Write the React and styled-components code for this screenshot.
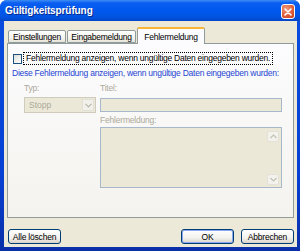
import React from 'react';
import styled, { createGlobalStyle } from 'styled-components';

const GlobalStyle = createGlobalStyle`
    * { box-sizing: border-box; }
    body {
        margin: 0;
        background: #ffffff;
        font-family: 'Liberation Sans', Arial, sans-serif;
    }
`;

const App = () => {
    return (
        <>
            <GlobalStyle />
            <Window>
                <TitleBar>
                    <Title>Gültigkeitsprüfung</Title>
                    <CloseButton>
                        <svg width="8" height="8" viewBox="0 0 8 8">
                            <path d="M1 1 L7 7 M7 1 L1 7" stroke="#fff" strokeWidth="1.6" strokeLinecap="round" />
                        </svg>
                    </CloseButton>
                </TitleBar>
                <Body>
                    <TabStrip>
                        <Tab $w={58}>Einstellungen</Tab>
                        <Tab $w={69}>Eingabemeldung</Tab>
                        <Tab $w={68} $active>Fehlermeldung</Tab>
                    </TabStrip>
                    <Panel>
                        <CheckRow>
                            <CheckBox />
                            <FocusLabel>Fehlermeldung anzeigen, wenn ungültige Daten eingegeben wurden.</FocusLabel>
                        </CheckRow>
                        <Heading>Diese Fehlermeldung anzeigen, wenn ungültige Daten eingegeben wurden:</Heading>
                        <Form>
                            <Column>
                                <Label>Typ:</Label>
                                <Select>
                                    <span>Stopp</span>
                                    <DropButton>
                                        <svg width="7" height="5" viewBox="0 0 7 5">
                                            <path d="M0.5 0.8 L3.5 3.8 L6.5 0.8" stroke="#b9b6a8" strokeWidth="1.2" fill="none" />
                                        </svg>
                                    </DropButton>
                                </Select>
                            </Column>
                            <Column>
                                <Label>Titel:</Label>
                                <Field />
                                <Label $gap>Fehlermeldung:</Label>
                                <Area>
                                    <ScrollBar>
                                        <ArrowBox>
                                            <svg width="7" height="5" viewBox="0 0 7 5">
                                                <path d="M0.5 4 L3.5 1 L6.5 4" stroke="#c3c1b4" strokeWidth="1.2" fill="none" />
                                            </svg>
                                        </ArrowBox>
                                        <ArrowBox>
                                            <svg width="7" height="5" viewBox="0 0 7 5">
                                                <path d="M0.5 1 L3.5 4 L6.5 1" stroke="#c3c1b4" strokeWidth="1.2" fill="none" />
                                            </svg>
                                        </ArrowBox>
                                    </ScrollBar>
                                </Area>
                            </Column>
                        </Form>
                    </Panel>
                    <Footer>
                        <Button>Alle löschen</Button>
                        <Spacer />
                        <Button $default>OK</Button>
                        <Button>Abbrechen</Button>
                    </Footer>
                </Body>
            </Window>
        </>
    );
};

const Window = styled.div`
    width: 300px;
    height: 251px;
    display: flex;
    flex-direction: column;
    background: linear-gradient(180deg, #0a4ee0, #0640d4 70%, #0a2fa8);
    border-radius: 7px 7px 0 0;
    overflow: hidden;
`;

const TitleBar = styled.div`
    height: 21px;
    flex: none;
    display: flex;
    align-items: center;
    justify-content: space-between;
    padding: 0 5px 0 5px;
    background: linear-gradient(180deg, #3d8cf4 0, #0a5ef0 3px, #0058ee 50%, #0054e2 80%, #0046c8 100%);
`;

const Title = styled.div`
    color: #ffffff;
    font-weight: bold;
    font-size: 10px;
    letter-spacing: -0.1px;
    text-shadow: 1px 1px 0 #0a2a8c;
`;

const CloseButton = styled.div`
    width: 14px;
    height: 15px;
    margin-top: 2px;
    display: flex;
    align-items: center;
    justify-content: center;
    border: 1px solid #ffffff;
    border-radius: 3px;
    background: radial-gradient(circle at 35% 30%, #f19a7d, #dc5a36 60%, #c2401e);
`;

const Body = styled.div`
    flex: 1;
    margin: 0 3px 4px 4px;
    background: #ece9d8;
    padding: 6px 3px 3px 3px;
    display: flex;
    flex-direction: column;
`;

const TabStrip = styled.div`
    height: 16px;
    flex: none;
    display: flex;
    align-items: flex-end;
    padding-left: 1px;
    position: relative;
    z-index: 1;
`;

const Tab = styled.div`
    width: ${(p) => p.$w}px;
    height: ${(p) => (p.$active ? '17px' : '13px')};
    margin-bottom: ${(p) => (p.$active ? '-1px' : '0')};
    margin-right: 1px;
    padding-top: ${(p) => (p.$active ? '1px' : '0')};
    display: flex;
    align-items: center;
    justify-content: center;
    font-size: 8.5px;
    letter-spacing: -0.25px;
    white-space: nowrap;
    color: #000000;
    border: 1px solid #919b9c;
    border-bottom: ${(p) => (p.$active ? 'none' : '1px solid #919b9c')};
    border-top: ${(p) => (p.$active ? '2px solid #f7b63a' : '1px solid #919b9c')};
    border-radius: 2px 2px 0 0;
    background: ${(p) => (p.$active ? '#fcfcfe' : 'linear-gradient(180deg, #ffffff, #f4f3ee 60%, #e6e4d9)')};
`;

const Panel = styled.div`
    height: 175px;
    flex: none;
    border: 1px solid #919b9c;
    background: linear-gradient(180deg, #fcfcfe, #f4f3ee);
    padding: 8px 6px 0 4px;
`;

const CheckRow = styled.div`
    display: flex;
    align-items: center;
    gap: 2px;
    height: 13px;
    padding-left: 1px;
`;

const CheckBox = styled.div`
    width: 9px;
    height: 10px;
    flex: none;
    border: 1px solid #1c5180;
    background: linear-gradient(135deg, #dcdcd7, #ffffff);
`;

const FocusLabel = styled.span`
    font-size: 8.5px;
    letter-spacing: -0.25px;
    color: #000000;
    outline: 1px dotted #000000;
    padding: 0 2px;
    line-height: 11px;
    white-space: nowrap;
`;

const Heading = styled.div`
    margin-top: 3px;
    font-size: 8.5px;
    letter-spacing: -0.25px;
    color: #1e45d2;
    white-space: nowrap;
    line-height: 11px;
`;

const Form = styled.div`
    display: grid;
    grid-template-columns: 72px 182px;
    gap: 4px;
    margin: 4px 0 0 12px;
`;

const Column = styled.div`
    display: flex;
    flex-direction: column;
`;

const Label = styled.div`
    font-size: 8.5px;
    letter-spacing: -0.2px;
    color: #aca899;
    line-height: 11px;
    margin: ${(p) => (p.$gap ? '3px 0 1px' : '0 0 3px')};
`;

const Select = styled.div`
    height: 16px;
    display: flex;
    align-items: center;
    justify-content: space-between;
    padding: 1px 1px 1px 4px;
    border: 1px solid #cfccbd;
    background: #ebe8d8;
    font-size: 8.5px;
    color: #aca899;
`;

const DropButton = styled.div`
    width: 12px;
    height: 12px;
    display: flex;
    align-items: center;
    justify-content: center;
    background: #f1f0ea;
    border: 1px solid #e2e0d6;
`;

const Field = styled.div`
    height: 14px;
    margin-top: 1px;
    border: 1px solid #a8b8cb;
    background: #ebe8d8;
`;

const Area = styled.div`
    height: 61px;
    display: flex;
    justify-content: flex-end;
    padding: 3px 2px 2px 0;
    border: 1px solid #a8b8cb;
    background: #ebe8d8;
`;

const ScrollBar = styled.div`
    width: 12px;
    display: flex;
    flex-direction: column;
    justify-content: space-between;
`;

const ArrowBox = styled.div`
    height: 11px;
    display: flex;
    align-items: center;
    justify-content: center;
    border: 1px solid #e4e2d8;
    border-radius: 2px;
    background: #f3f2ec;
`;

const Footer = styled.div`
    display: flex;
    gap: 7px;
    margin-top: 11px;
    padding-left: 1px;
`;

const Spacer = styled.div`
    flex: 1;
`;

const Button = styled.div`
    width: 53px;
    height: 15px;
    display: flex;
    align-items: center;
    justify-content: center;
    font-size: 8.5px;
    letter-spacing: -0.2px;
    white-space: nowrap;
    color: #000000;
    border: 1px solid #003c74;
    border-radius: 3px;
    background: linear-gradient(180deg, #ffffff, #f3f2ee 60%, #d8d3c8);
    box-shadow: ${(p) => (p.$default ? 'inset 0 0 0 1px #8aa8ef' : 'none')};
`;

export default App;
